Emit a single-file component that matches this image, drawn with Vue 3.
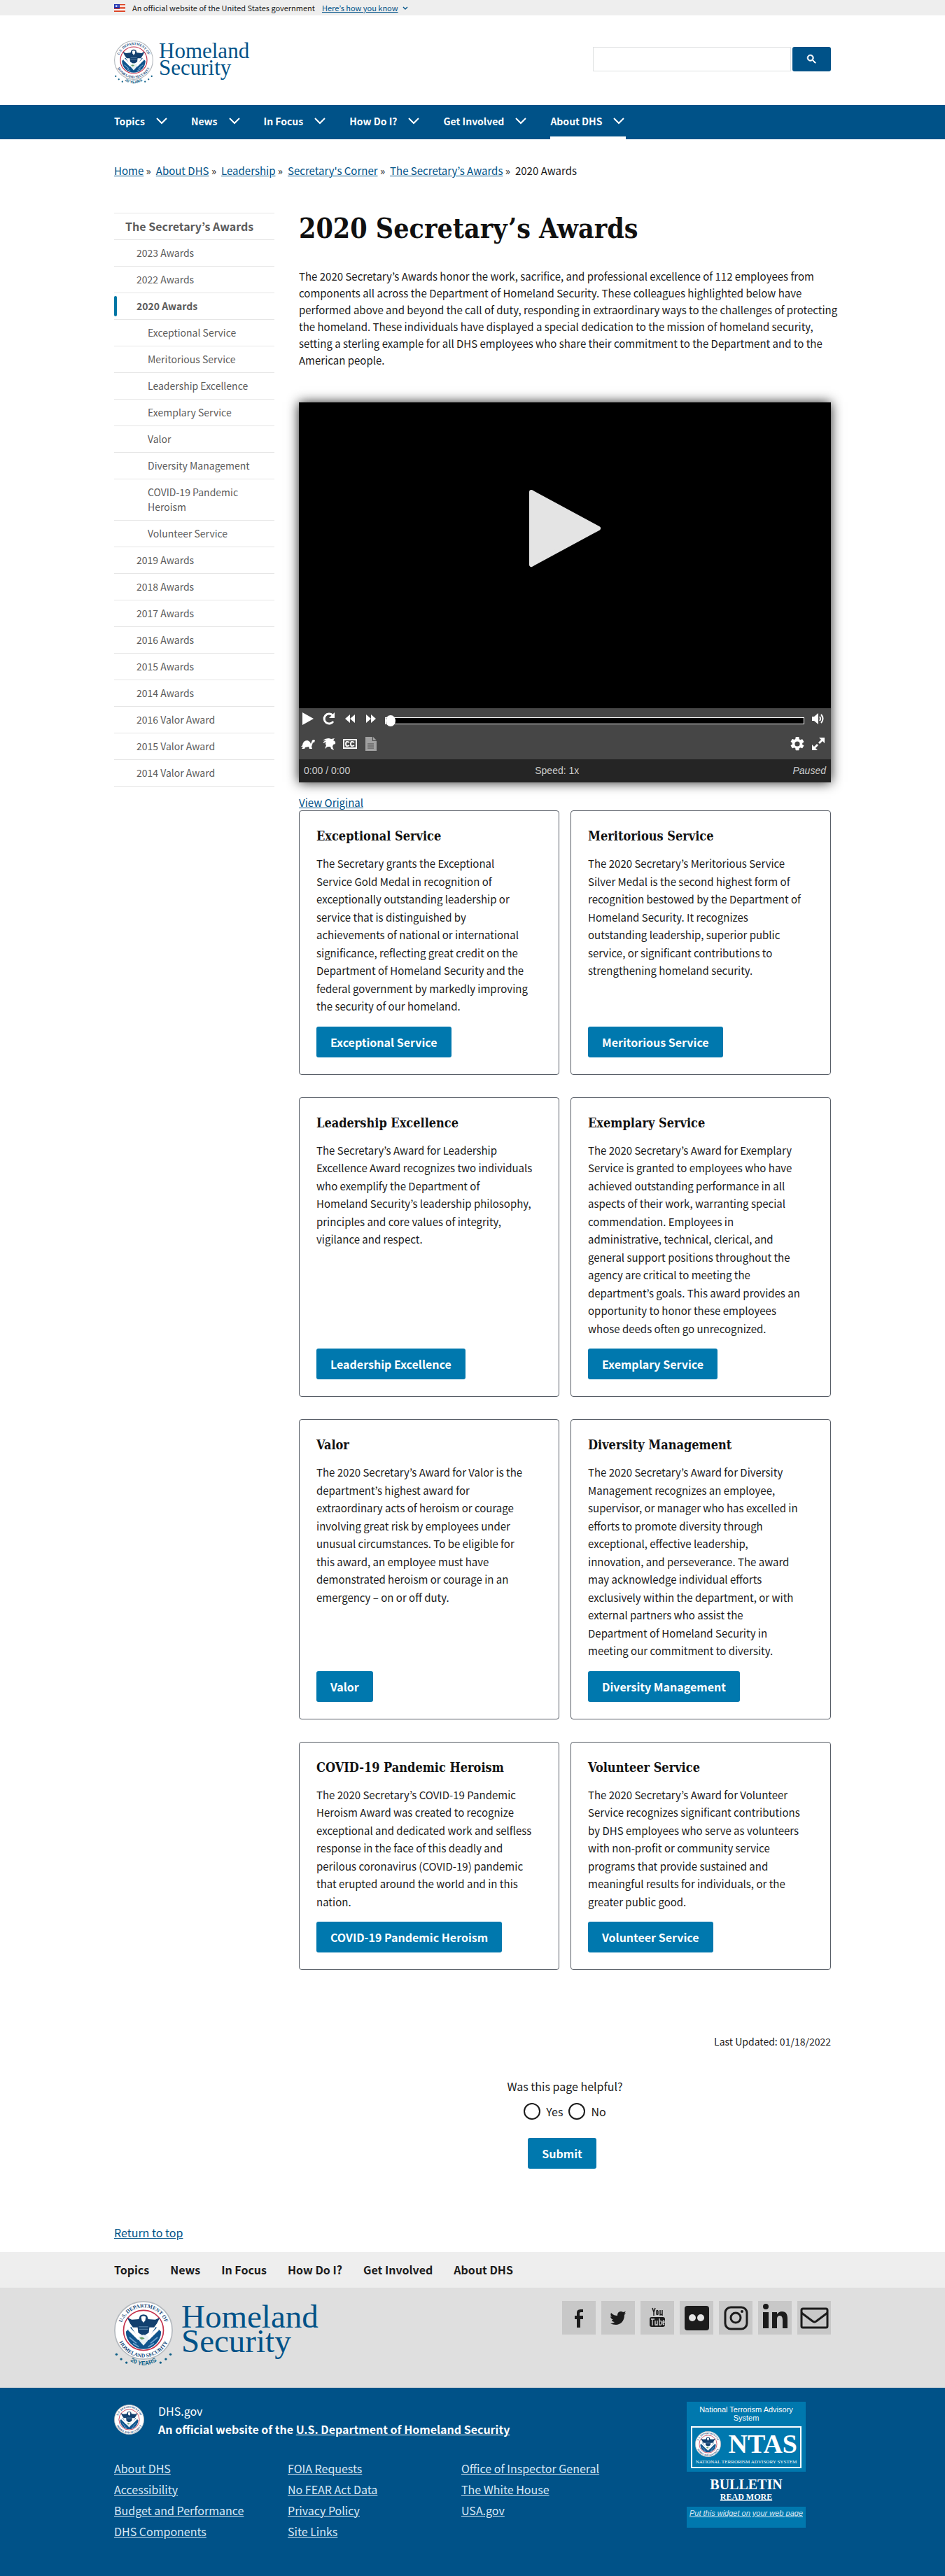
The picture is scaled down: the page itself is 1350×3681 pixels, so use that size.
<script setup>
import { ref } from 'vue'

const topics = ['Topics', 'News', 'In Focus', 'How Do I?', 'Get Involved', 'About DHS']
const crumbs = ['Home', 'About DHS', 'Leadership', "Secretary's Corner", 'The Secretary’s Awards']

const sideLinks = [
  { label: 'The Secretary’s Awards', level: 1 },
  { label: '2023 Awards', level: 2 },
  { label: '2022 Awards', level: 2 },
  { label: '2020 Awards', level: 2, current: true },
  { label: 'Exceptional Service', level: 3 },
  { label: 'Meritorious Service', level: 3 },
  { label: 'Leadership Excellence', level: 3 },
  { label: 'Exemplary Service', level: 3 },
  { label: 'Valor', level: 3 },
  { label: 'Diversity Management', level: 3 },
  { label: 'COVID-19 Pandemic Heroism', level: 3 },
  { label: 'Volunteer Service', level: 3 },
  { label: '2019 Awards', level: 2 },
  { label: '2018 Awards', level: 2 },
  { label: '2017 Awards', level: 2 },
  { label: '2016 Awards', level: 2 },
  { label: '2015 Awards', level: 2 },
  { label: '2014 Awards', level: 2 },
  { label: '2016 Valor Award', level: 2 },
  { label: '2015 Valor Award', level: 2 },
  { label: '2014 Valor Award', level: 2 },
]

// Line ends in the card texts are kept by `white-space: pre-line`.
const cards = [
  {
    title: 'Exceptional Service',
    text: `The Secretary grants the Exceptional
Service Gold Medal in recognition of
exceptionally outstanding leadership or
service that is distinguished by
achievements of national or international
significance, reflecting great credit on the
Department of Homeland Security and the
federal government by markedly improving
the security of our homeland.`,
  },
  {
    title: 'Meritorious Service',
    text: `The 2020 Secretary’s Meritorious Service
Silver Medal is the second highest form of
recognition bestowed by the Department of
Homeland Security. It recognizes
outstanding leadership, superior public
service, or significant contributions to
strengthening homeland security.`,
  },
  {
    title: 'Leadership Excellence',
    text: `The Secretary’s Award for Leadership
Excellence Award recognizes two individuals
who exemplify the Department of
Homeland Security’s leadership philosophy,
principles and core values of integrity,
vigilance and respect.`,
  },
  {
    title: 'Exemplary Service',
    text: `The 2020 Secretary’s Award for Exemplary
Service is granted to employees who have
achieved outstanding performance in all
aspects of their work, warranting special
commendation. Employees in
administrative, technical, clerical, and
general support positions throughout the
agency are critical to meeting the
department’s goals. This award provides an
opportunity to honor these employees
whose deeds often go unrecognized.`,
  },
  {
    title: 'Valor',
    text: `The 2020 Secretary’s Award for Valor is the
department’s highest award for
extraordinary acts of heroism or courage
involving great risk by employees under
unusual circumstances. To be eligible for
this award, an employee must have
demonstrated heroism or courage in an
emergency – on or off duty.`,
  },
  {
    title: 'Diversity Management',
    text: `The 2020 Secretary’s Award for Diversity
Management recognizes an employee,
supervisor, or manager who has excelled in
efforts to promote diversity through
exceptional, effective leadership,
innovation, and perseverance. The award
may acknowledge individual efforts
exclusively within the department, or with
external partners who assist the
Department of Homeland Security in
meeting our commitment to diversity.`,
  },
  {
    title: 'COVID-19 Pandemic Heroism',
    text: `The 2020 Secretary’s COVID-19 Pandemic
Heroism Award was created to recognize
exceptional and dedicated work and selfless
response in the face of this deadly and
perilous coronavirus (COVID-19) pandemic
that erupted around the world and in this
nation.`,
  },
  {
    title: 'Volunteer Service',
    text: `The 2020 Secretary’s Award for Volunteer
Service recognizes significant contributions
by DHS employees who serve as volunteers
with non-profit or community service
programs that provide sustained and
meaningful results for individuals, or the
greater public good.`,
  },
]

const footerColumns = [
  ['About DHS', 'Accessibility', 'Budget and Performance', 'DHS Components'],
  ['FOIA Requests', 'No FEAR Act Data', 'Privacy Policy', 'Site Links'],
  ['Office of Inspector General', 'The White House', 'USA.gov'],
]

const query = ref('')
const helpful = ref('')
const position = ref(0)
</script>

<template>
  <div class="page">
    <svg class="defs" width="0" height="0" aria-hidden="true">
      <defs>
        <path id="arc-top" d="M11 50 A39 39 0 0 1 89 50" />
        <path id="arc-bottom" d="M4 50 A46 46 0 0 0 96 50" />
        <path id="arc-years" d="M10 87 Q50 132 90 87" />
        <symbol id="seal" viewBox="0 0 100 100">
          <circle cx="50" cy="50" r="49" fill="#fff" stroke="#b4b9be" stroke-width="2" />
          <g fill="#16497a" font-family="Liberation Serif, serif" font-size="9" font-weight="bold">
            <text text-anchor="middle"><textPath href="#arc-top" startOffset="50%">U.S. DEPARTMENT OF</textPath></text>
            <text text-anchor="middle"><textPath href="#arc-bottom" startOffset="50%">HOMELAND SECURITY</textPath></text>
          </g>
          <circle cx="50" cy="50" r="34" fill="#fff" stroke="#c4314b" stroke-width="2" />
          <path d="M20 52 A30 30 0 0 0 80 52 L71 44 L61 60 L50 70 L39 60 L29 44 Z" fill="#0f548c" />
          <path d="M22 28 L30 32 L42 31 L44 25 Q50 21 56 25 L58 31 L70 32 L78 28 L73 38 L68 45 L60 45 L59 54 L50 60 L41 54 L40 45 L32 45 L27 38 Z" fill="#12406f" />
          <path d="M46 27 Q50 24 54 27 L53 33 L50 37 L47 33 Z" fill="#fff" />
          <path d="M42 44 H58 M42 48 H58" stroke="#7fa8cb" stroke-width="1" />
          <path d="M24 42 L41 60 L46 68 L40 66 L24 50 Z M76 42 L59 60 L54 68 L60 66 L76 50 Z" fill="#fff" />
          <path d="M41 61 Q50 54 59 61 L57 68 L50 76 L43 68 Z" fill="#e9f1f4" />
          <path d="M43 63 Q48 60 52 64 L47 66 Z" fill="#6aa36b" />
          <path d="M26 62 L38 72 M74 62 L62 72 M32 72 L42 78 M68 72 L58 78" stroke="#6fa3cf" stroke-width="2" />
        </symbol>
        <symbol id="seal-years" viewBox="0 0 100 118">
          <use href="#seal" width="100" height="100" />
          <g fill="#0b5e86">
            <circle cx="4" cy="91" r="2" />
            <circle cx="12" cy="99" r="2" />
            <circle cx="21" cy="105" r="2" />
            <circle cx="79" cy="105" r="2" />
            <circle cx="88" cy="99" r="2" />
            <circle cx="96" cy="91" r="2" />
            <text text-anchor="middle" font-family="Liberation Sans, sans-serif" font-size="10" font-weight="bold">
              <textPath href="#arc-years" startOffset="50%">20 YEARS</textPath>
            </text>
          </g>
        </symbol>
      </defs>
    </svg>

    <section class="banner" aria-label="Official government website">
      <div class="wrap banner-inner">
        <svg class="flag" viewBox="0 0 16 11" aria-hidden="true">
          <rect width="16" height="11" fill="#fff" />
          <path d="M0 .5H16M0 2.5H16M0 4.5H16M0 6.5H16M0 8.5H16M0 10.5H16" stroke="#db3e1f" />
          <rect width="8" height="6" fill="#1e33b1" />
          <path d="M1 1.5H7M1 3.5H7" stroke="#fff" stroke-dasharray="1 1" />
        </svg>
        <span>An official website of the United States government</span>
        <button type="button" class="know">
          <span>Here’s how you know</span>
          <svg viewBox="0 0 8 5" aria-hidden="true"><path d="M1 1 L4 4 L7 1" fill="none" stroke="#005288" stroke-width="1.4" /></svg>
        </button>
      </div>
    </section>

    <header class="wrap masthead">
      <a href="#" class="logo">
        <svg class="logo-seal" aria-hidden="true"><use href="#seal-years" /></svg>
        <span class="logo-name">Homeland<br />Security</span>
      </a>
      <form class="search" role="search" @submit.prevent>
        <input v-model="query" type="search" aria-label="Search" />
        <button type="submit" aria-label="Search">
          <svg viewBox="0 0 24 24" aria-hidden="true">
            <path fill="#fff" d="M15.500 14h-.79l-.28-.27A6.470 6.470 0 0 0 16 9.500 6.500 6.500 0 1 0 9.500 16c1.610 0 3.090-.59 4.230-1.570l.27.28v.79l5 4.990L20.490 19l-4.990-5zm-6 0C7.010 14 5 11.990 5 9.500S7.010 5 9.500 5 14 7.010 14 9.500 11.990 14 9.500 14z" stroke="#fff" />
          </svg>
        </button>
      </form>
    </header>

    <nav class="primary" aria-label="Primary">
      <ul class="wrap">
        <li v-for="topic in topics" :key="topic">
          <button type="button" :class="{ active: topic === 'About DHS' }">
            <span>{{ topic }}</span>
            <svg viewBox="0 0 18 12" aria-hidden="true"><path d="M1 2 L8 9 L15 2" fill="none" stroke="#fff" stroke-width="2" /></svg>
          </button>
        </li>
      </ul>
    </nav>

    <div class="wrap">
      <nav class="crumbs" aria-label="Breadcrumb">
        <ol>
          <li v-for="crumb in crumbs" :key="crumb"><a href="#">{{ crumb }}</a> »</li>
          <li aria-current="page">2020 Awards</li>
        </ol>
      </nav>

      <div class="columns">
        <aside>
          <ul class="side">
            <li v-for="item in sideLinks" :key="item.label">
              <a href="#" :class="['level-' + item.level, { current: item.current }]">{{ item.label }}</a>
            </li>
          </ul>
        </aside>

        <main>
          <h1>2020 Secretary’s Awards</h1>
          <p class="intro">
            The 2020 Secretary’s Awards honor the work, sacrifice, and professional excellence of 112 employees from<br />
            components all across the Department of Homeland Security. These colleagues highlighted below have<br />
            performed above and beyond the call of duty, responding in extraordinary ways to the challenges of protecting<br />
            the homeland. These individuals have displayed a special dedication to the mission of homeland security,<br />
            setting a sterling example for all DHS employees who share their commitment to the Department and to the<br />
            American people.
          </p>

          <section class="player" aria-label="Media player">
            <div class="screen">
              <button type="button" aria-label="Play video">
                <svg viewBox="0 0 104 114" aria-hidden="true"><path d="M4 5 L100 57 L4 109 Z" fill="#e4e4e4" stroke="#e4e4e4" stroke-width="6" stroke-linejoin="round" /></svg>
              </button>
            </div>
            <div class="controls">
              <div class="control-row">
                <button type="button" aria-label="Play"><svg viewBox="0 0 20 20"><path d="M2 1 L18 10 L2 19Z" /></svg></button>
                <button type="button" aria-label="Restart"><svg viewBox="0 0 20 20"><path d="M16 14 A7 7 0 1 1 15 5" fill="none" stroke="#fff" stroke-width="3" /><path d="M18 1 V9 H10Z" /></svg></button>
                <button type="button" aria-label="Rewind"><svg viewBox="0 0 20 20"><path d="M10 4 V16 L3 10Z M17 4 V16 L10 10Z" /></svg></button>
                <button type="button" aria-label="Forward"><svg viewBox="0 0 20 20"><path d="M3 4 L10 10 L3 16Z M10 4 L17 10 L10 16Z" /></svg></button>
                <input v-model="position" class="seek" type="range" min="0" max="100" aria-label="Seek" />
                <button type="button" aria-label="Volume"><svg viewBox="0 0 20 20"><path d="M1 7 H4 L10 2 V18 L4 13 H1Z" /><path d="M12 7 Q14 10 12 13 M14 4 Q19 10 14 16" fill="none" stroke="#fff" stroke-width="2" /></svg></button>
              </div>
              <div class="control-row">
                <button type="button" aria-label="Slower"><svg viewBox="0 0 20 20"><path d="M2 12 Q3 5 9 5 Q13 6 14 10 L16 5 Q18 3 20 5 L19 8 L17 8 L15 14 L16 17 H12 L11 14 L6 15 L5 17 H1 L3 14 L0 14Z" /></svg></button>
                <button type="button" aria-label="Faster"><svg viewBox="0 0 20 20"><path d="M1 5 Q8 0 13 3 L18 2 L16 5 Q20 6 19 10 L16 11 L15 14 L17 19 L13 17 L12 14 L8 14 L4 17 L6 12 Q4 10 6 7 L2 9 Q1 7 6 5Z" /></svg></button>
                <button type="button" aria-label="Captions"><svg viewBox="0 0 20 20"><path fill-rule="evenodd" d="M0 3 H20 V17 H0Z M2 5 V15 H18 V5Z" /><path d="M9 8 Q4 5 4 10 Q4 15 9 12 M16 8 Q11 5 11 10 Q11 15 16 12" fill="none" stroke="#fff" stroke-width="2" /></svg></button>
                <button type="button" aria-label="Transcript" disabled><svg viewBox="0 0 20 20"><path fill="#a0a0a0" d="M2 0 H12 V6 H18 V20 H2Z M13 0 L18 5 H13Z" /><path d="M5 10 H14 M5 13 H14 M5 16 H14" stroke="#464646" /></svg></button>
                <span class="spring"></span>
                <button type="button" aria-label="Preferences"><svg viewBox="2 2 20 20"><path d="M19.140 12.940c.04-.3.06-.61.06-.94s-.02-.64-.07-.94l2.030-1.580a.49.49 0 0 0 .12-.61l-1.920-3.320a.49.49 0 0 0-.59-.22l-2.390.96a7 7 0 0 0-1.620-.94l-.36-2.540A.48.48 0 0 0 13.920 2h-3.840a.48.48 0 0 0-.47.410l-.36 2.540c-.59.240-1.130.570-1.620.940l-2.390-.96a.48.48 0 0 0-.59.220L2.740 8.470a.48.48 0 0 0 .12.610l2.030 1.580c-.05.3-.09.63-.09.94s.02.640.07.940l-2.030 1.580a.49.49 0 0 0-.12.610l1.920 3.320c.12.220.370.290.590.220l2.390-.96c.5.380 1.030.7 1.620.940l.36 2.540c.05.240.240.410.480.410h3.840c.240 0 .440-.17.470-.41l.36-2.540a7 7 0 0 0 1.620-.94l2.390.96c.220.080.470 0 .590-.22l1.920-3.320a.48.48 0 0 0-.12-.61zM12 15.600a3.600 3.600 0 1 1 0-7.200 3.600 3.600 0 0 1 0 7.200z" /></svg></button>
                <button type="button" aria-label="Full screen"><svg viewBox="0 0 20 20"><path d="M11 1 H19 V9 L16 6 L12 10 L10 8 L14 4Z M9 19 H1 V11 L4 14 L8 10 L10 12 L6 16Z" /></svg></button>
              </div>
            </div>
            <div class="status">
              <span>0:00 / 0:00</span>
              <span>Speed: 1x</span>
              <em>Paused</em>
            </div>
          </section>
          <p class="original"><a href="#">View Original</a></p>

          <div class="cards">
            <article v-for="card in cards" :key="card.title">
              <h2>{{ card.title }}</h2>
              <p>{{ card.text }}</p>
              <a href="#" class="button">{{ card.title }}</a>
            </article>
          </div>

          <p class="updated">Last Updated: 01/18/2022</p>

          <form class="feedback" @submit.prevent>
            <fieldset>
              <legend>Was this page helpful?</legend>
              <div class="choices">
                <label><input v-model="helpful" type="radio" name="helpful" value="yes" />Yes</label>
                <label><input v-model="helpful" type="radio" name="helpful" value="no" />No</label>
              </div>
            </fieldset>
            <button type="submit" class="button">Submit</button>
          </form>
        </main>
      </div>
      <p class="return"><a href="#">Return to top</a></p>
    </div>

    <footer>
      <nav class="footer-nav" aria-label="Footer">
        <ul class="wrap">
          <li v-for="topic in topics" :key="topic"><a href="#">{{ topic }}</a></li>
        </ul>
      </nav>
      <div class="footer-brand">
        <div class="wrap">
          <div class="logo large">
            <svg class="logo-seal" aria-hidden="true"><use href="#seal-years" /></svg>
            <span class="logo-name">Homeland<br />Security</span>
          </div>
          <ul class="social">
            <li><a href="#" aria-label="Facebook"><svg viewBox="0 0 48 48"><path d="M30 12v4h-3c-2 0-2 1-2 2v3h5v5h-4v12h-5V26h-3v-5h3v-4c0-4 3-5 6-5z" /></svg></a></li>
            <li><a href="#" aria-label="Twitter"><svg viewBox="0 0 48 48"><path d="M35 17l-2 3c0 9-6 14-12 14-3 0-6-1-8-2 3 0 5-1 6-2-2 0-4-1-4-3h2c-2-1-4-3-4-5l2 1c-2-2-2-4-1-6 3 3 6 4 9 4 0-4 2-6 5-6 1 0 2 0 3 1l4-1-2 3z" /></svg></a></li>
            <li><a href="#" aria-label="YouTube"><svg viewBox="0 0 48 48"><path d="M17 10l2 6v5M21 10l-2 6M25 14v5q-1 1-2 0v-5q1-1 2 0M28 13v7q2 0 3-2M31 13v8" fill="none" stroke="#1b1b1b" stroke-width="1.500" /><rect x="13" y="23" width="22" height="14" rx="3" /><path d="M15 26h5M17 26v9M21 28v6q1 1 3-1M24 28v7M27 25v9q3 1 3-2v-2q0-2-3-1M32 31h2q0-3-1-3t-1 3q0 4 2 2" fill="none" stroke="#d0d0d0" stroke-width="1.400" /></svg></a></li>
            <li><a href="#" aria-label="Flickr"><svg viewBox="0 0 48 48"><rect x="7" y="7" width="35" height="35" rx="4" /><circle cx="18" cy="24" r="5" fill="#e4e4e4" /><circle cx="30" cy="24" r="5" fill="#e4e4e4" /></svg></a></li>
            <li><a href="#" aria-label="Instagram"><svg viewBox="0 0 48 48"><g fill="none" stroke="#1b1b1b" stroke-width="3"><rect x="9" y="9" width="31" height="31" rx="8" /><circle cx="24" cy="24" r="7" /></g><circle cx="33" cy="15" r="2" /></svg></a></li>
            <li><a href="#" aria-label="LinkedIn"><svg viewBox="0 0 48 48"><circle cx="11" cy="8" r="4" /><path d="M7 16h8v23H7zM20 16h7v3c1-2 4-4 7-4 6 0 8 4 8 10v14h-7V27c0-3-1-6-4-6s-4 2-4 6v12h-7z" /></svg></a></li>
            <li><a href="#" aria-label="Email"><svg viewBox="0 0 48 48"><g fill="none" stroke="#1b1b1b" stroke-width="3" stroke-linejoin="round"><rect x="6" y="11" width="37" height="27" rx="2" /><path d="M6 17L22 29q3 2 5 0L43 17" /></g></svg></a></li>
          </ul>
        </div>
      </div>
      <div class="footer-base">
        <div class="wrap">
          <div class="identity-links">
            <div class="identity">
              <svg aria-hidden="true"><use href="#seal" /></svg>
              <p>DHS.gov<br /><strong>An official website of the <a href="#">U.S. Department of Homeland Security</a></strong></p>
            </div>
            <div class="link-columns">
              <ul v-for="(column, i) in footerColumns" :key="i">
                <li v-for="link in column" :key="link"><a href="#">{{ link }}</a></li>
              </ul>
            </div>
          </div>
          <section class="ntas" aria-label="National Terrorism Advisory System">
            <div class="ntas-top">
              <p>National Terrorism Advisory System</p>
              <div class="ntas-box">
                <div class="ntas-mark">
                  <svg aria-hidden="true"><use href="#seal" /></svg>
                  <span>NTAS</span>
                </div>
                <svg class="ntas-small" viewBox="0 0 144 9" aria-hidden="true">
                  <text x="72" y="7" text-anchor="middle" font-family="Liberation Serif, serif" font-size="7" fill="#fff">NATIONAL TERRORISM ADVISORY SYSTEM</text>
                </svg>
              </div>
            </div>
            <div class="ntas-bulletin">
              <strong>BULLETIN</strong>
              <a href="#">READ MORE</a>
            </div>
            <div class="ntas-widget"><a href="#">Put this widget on your web page</a></div>
          </section>
        </div>
      </div>
    </footer>
  </div>
</template>

<style>
body {
  margin: 0;
}
</style>

<style scoped>
.page {
  background: #fff;
  color: #1b1b1b;
  font: 16px/24px "Noto Sans CJK KR", "Open Sans", sans-serif;
}
.page * {
  box-sizing: border-box;
}
.defs {
  position: absolute;
}
.wrap {
  width: 100%;
  max-width: 1024px;
  margin: 0 auto;
}
ul,
ol {
  list-style: none;
  margin: 0;
  padding: 0;
}
p,
h1,
h2 {
  margin: 0;
}
a {
  color: #005288;
}
button {
  font: inherit;
  border: 0;
  padding: 0;
  background: none;
  cursor: pointer;
}

.banner {
  background: #eee;
  font-size: 11px;
  line-height: 22px;
}
.banner-inner {
  display: flex;
  align-items: center;
  gap: 10px;
}
.flag {
  width: 16px;
  height: 11px;
}
.know {
  display: flex;
  align-items: center;
  gap: 6px;
  color: #005288;
}
.know span {
  text-decoration: underline;
}
.know svg {
  width: 8px;
  height: 5px;
}

.masthead {
  display: flex;
  justify-content: space-between;
  align-items: flex-start;
  padding: 36px 0 26px;
}
.logo {
  display: flex;
  gap: 8px;
  text-decoration: none;
}
.logo-seal {
  width: 56px;
  height: 66px;
}
.logo-name {
  padding-top: 3px;
  color: #005288;
  font: 31px/24px "Liberation Serif", serif;
}
.logo.large {
  gap: 12px;
}
.large .logo-seal {
  width: 84px;
  height: 99px;
}
.large .logo-name {
  padding-top: 5px;
  font-size: 47px;
  line-height: 35px;
}
.search {
  display: flex;
  gap: 2px;
  padding-top: 9px;
}
.search input {
  width: 283px;
  height: 35px;
  border: 1px solid #dfe1e2;
  padding: 0 8px;
  font: inherit;
}
.search button {
  display: grid;
  place-items: center;
  width: 55px;
  height: 35px;
  border-radius: 3px;
  background: #005288;
}
.search svg {
  width: 17px;
  height: 17px;
}

.primary {
  background: #005288;
}
.primary ul {
  display: flex;
  gap: 32px;
}
.primary button {
  display: flex;
  align-items: center;
  gap: 16px;
  height: 49px;
  border-bottom: 4px solid transparent;
  color: #fff;
  font-size: 14px;
  font-weight: 700;
}
.primary .active {
  border-bottom-color: #fff;
}
.primary svg {
  width: 18px;
  height: 12px;
}

.crumbs {
  padding: 33px 0 48px;
  font-size: 15px;
}
.crumbs ol {
  display: flex;
  gap: 7px;
}
.columns {
  display: grid;
  grid-template-columns: 229px minmax(0, 1fr);
  gap: 35px;
}
.side {
  border-bottom: 1px solid #e6e6e6;
  font-size: 14px;
  line-height: 21px;
}
.side li {
  border-top: 1px solid #e6e6e6;
}
.side a {
  display: block;
  position: relative;
  padding: 8px 16px 8px 32px;
  color: #5c5c5c;
  text-decoration: none;
}
.side .level-1 {
  padding-left: 16px;
  font-size: 16px;
  font-weight: 700;
}
.side .level-3 {
  padding-left: 48px;
}
.side .current {
  font-weight: 700;
}
.side .current::before {
  content: "";
  position: absolute;
  left: 0;
  top: 4px;
  bottom: 4px;
  width: 4px;
  border-radius: 4px;
  background: #0076a5;
}

h1,
h2 {
  font-family: "DejaVu Serif Condensed", "DejaVu Serif", serif;
  font-weight: 700;
  color: #111;
}
h1 {
  font-size: 39px;
  line-height: 44px;
}
.intro {
  margin-right: -20px;
  padding: 35px 0 48px;
  font-size: 15px;
}

.player {
  box-shadow: 0 0 16px #222;
  color: #ccc;
  font: 14px/33px "Liberation Sans", sans-serif;
}
.screen {
  display: grid;
  place-items: center;
  aspect-ratio: 760 / 437;
  background: #000;
  padding-bottom: 78px;
}
.screen svg {
  display: block;
  width: 104px;
  height: 114px;
}
.controls {
  height: 73px;
  background: #464646;
  padding: 5px 8px 0 3px;
}
.control-row {
  display: flex;
  align-items: center;
  gap: 10px;
  height: 20px;
  margin-bottom: 16px;
}
.control-row button {
  width: 20px;
  height: 20px;
}
.control-row button svg {
  display: block;
  width: 20px;
  height: 20px;
  fill: #fff;
}
.spring {
  flex: 1;
}
.seek {
  flex: 1;
  min-width: 0;
  height: 10px;
  margin: 5px 0 0;
  border: 1px solid #fff;
  background: #000;
  appearance: none;
}
.seek::-webkit-slider-thumb {
  appearance: none;
  width: 14px;
  height: 16px;
  border-radius: 50%;
  background: #fff;
}
.status {
  display: grid;
  grid-template-columns: 34% 29% 37%;
  padding: 0 7px;
  background: #252525;
}
.status span:nth-child(2) {
  text-align: center;
}
.status em {
  text-align: right;
}
.original {
  padding-top: 18px;
  font-size: 15px;
  line-height: 22px;
}

.cards {
  display: grid;
  grid-template-columns: 1fr 1fr;
  gap: 32px 16px;
}
.cards article {
  display: flex;
  flex-direction: column;
  align-items: flex-start;
  padding: 24px;
  border: 1px solid #565c65;
  border-radius: 4px;
}
.cards h2 {
  margin-bottom: 14px;
  font-size: 18px;
  line-height: 24px;
}
.cards p {
  flex: 1;
  margin-bottom: 16px;
  font-size: 15px;
  line-height: 1.7;
  white-space: pre-line;
}
.button {
  display: inline-block;
  padding: 0 20px;
  border-radius: 3px;
  background: #0078ae;
  color: #fff;
  font-weight: 700;
  line-height: 44px;
  text-decoration: none;
}
.updated {
  padding: 90px 0 40px;
  font-size: 14px;
  text-align: right;
}
.feedback {
  display: flex;
  flex-direction: column;
  align-items: center;
}
.feedback fieldset {
  border: 0;
  margin: 0 0 26px;
  padding: 0;
}
.feedback legend {
  padding: 0;
}
.feedback .button {
  margin-right: 8px;
}
.choices {
  display: flex;
  justify-content: center;
  gap: 8px;
  padding-top: 12px;
}
.choices label {
  display: flex;
  gap: 8px;
}
.choices input {
  appearance: none;
  width: 24px;
  height: 24px;
  margin: 0;
  border: 2px solid #1b1b1b;
  border-radius: 50%;
}
.choices input:checked {
  background: #005288;
}
.return {
  padding: 79px 0 16px;
}

.footer-nav {
  background: #eee;
}
.footer-nav ul {
  display: flex;
  gap: 30px;
}
.footer-nav a {
  color: #1b1b1b;
  font-weight: 700;
  line-height: 51px;
  text-decoration: none;
}
.footer-brand {
  background: #dfdfdf;
  padding: 19px 0 25px;
}
.footer-brand .wrap {
  display: flex;
  justify-content: space-between;
}
.social {
  display: flex;
  gap: 8px;
}
.social a {
  display: block;
  width: 48px;
  height: 48px;
  background: #c8c8c8;
}
.social svg {
  display: block;
  width: 48px;
  height: 48px;
  fill: #1b1b1b;
}
.footer-base {
  background: #005288;
  padding: 20px 0 49px;
}
.footer-base .wrap {
  display: flex;
  justify-content: space-between;
  padding-right: 36px;
}
.footer-base a {
  color: #dce9f5;
}
.identity-links {
  flex: 1;
}
.identity {
  display: flex;
  gap: 20px;
  color: #fff;
  line-height: 26px;
}
.identity svg {
  width: 43px;
  height: 43px;
  margin-top: 4px;
}
.identity strong a {
  color: #fff;
}
.link-columns {
  display: grid;
  grid-template-columns: repeat(3, 248px);
  padding-top: 28px;
  line-height: 30px;
}
.ntas {
  width: 170px;
  color: #fff;
  font: 11px/12px "Liberation Sans", sans-serif;
  text-align: center;
}
.ntas-top {
  height: 100px;
  padding: 5px 6px;
  background: #0078ae;
}
.ntas-top p {
  padding: 0 8px;
}
.ntas-box {
  height: 60px;
  margin-top: 6px;
  padding: 5px 4px 0;
  border: 2px solid #fff;
}
.ntas-mark {
  display: flex;
  justify-content: space-between;
  align-items: center;
  height: 37px;
}
.ntas-mark svg {
  width: 37px;
  height: 37px;
}
.ntas-mark span {
  font: 700 38px/37px "Liberation Serif", serif;
}
.ntas-small {
  display: block;
  width: 100%;
  height: 10px;
  margin-top: 1px;
}
.ntas-bulletin {
  display: flex;
  flex-direction: column;
  align-items: center;
  height: 50px;
  padding-top: 8px;
  font-family: "Liberation Serif", serif;
}
.ntas-bulletin strong {
  font-size: 20px;
  line-height: 20px;
}
.ntas-bulletin a {
  font-size: 12px;
  font-weight: 700;
  line-height: 16px;
  color: #fff;
}
.ntas-widget {
  height: 30px;
  padding-top: 3px;
  background: #0078ae;
  font-style: italic;
  white-space: nowrap;
}
</style>
